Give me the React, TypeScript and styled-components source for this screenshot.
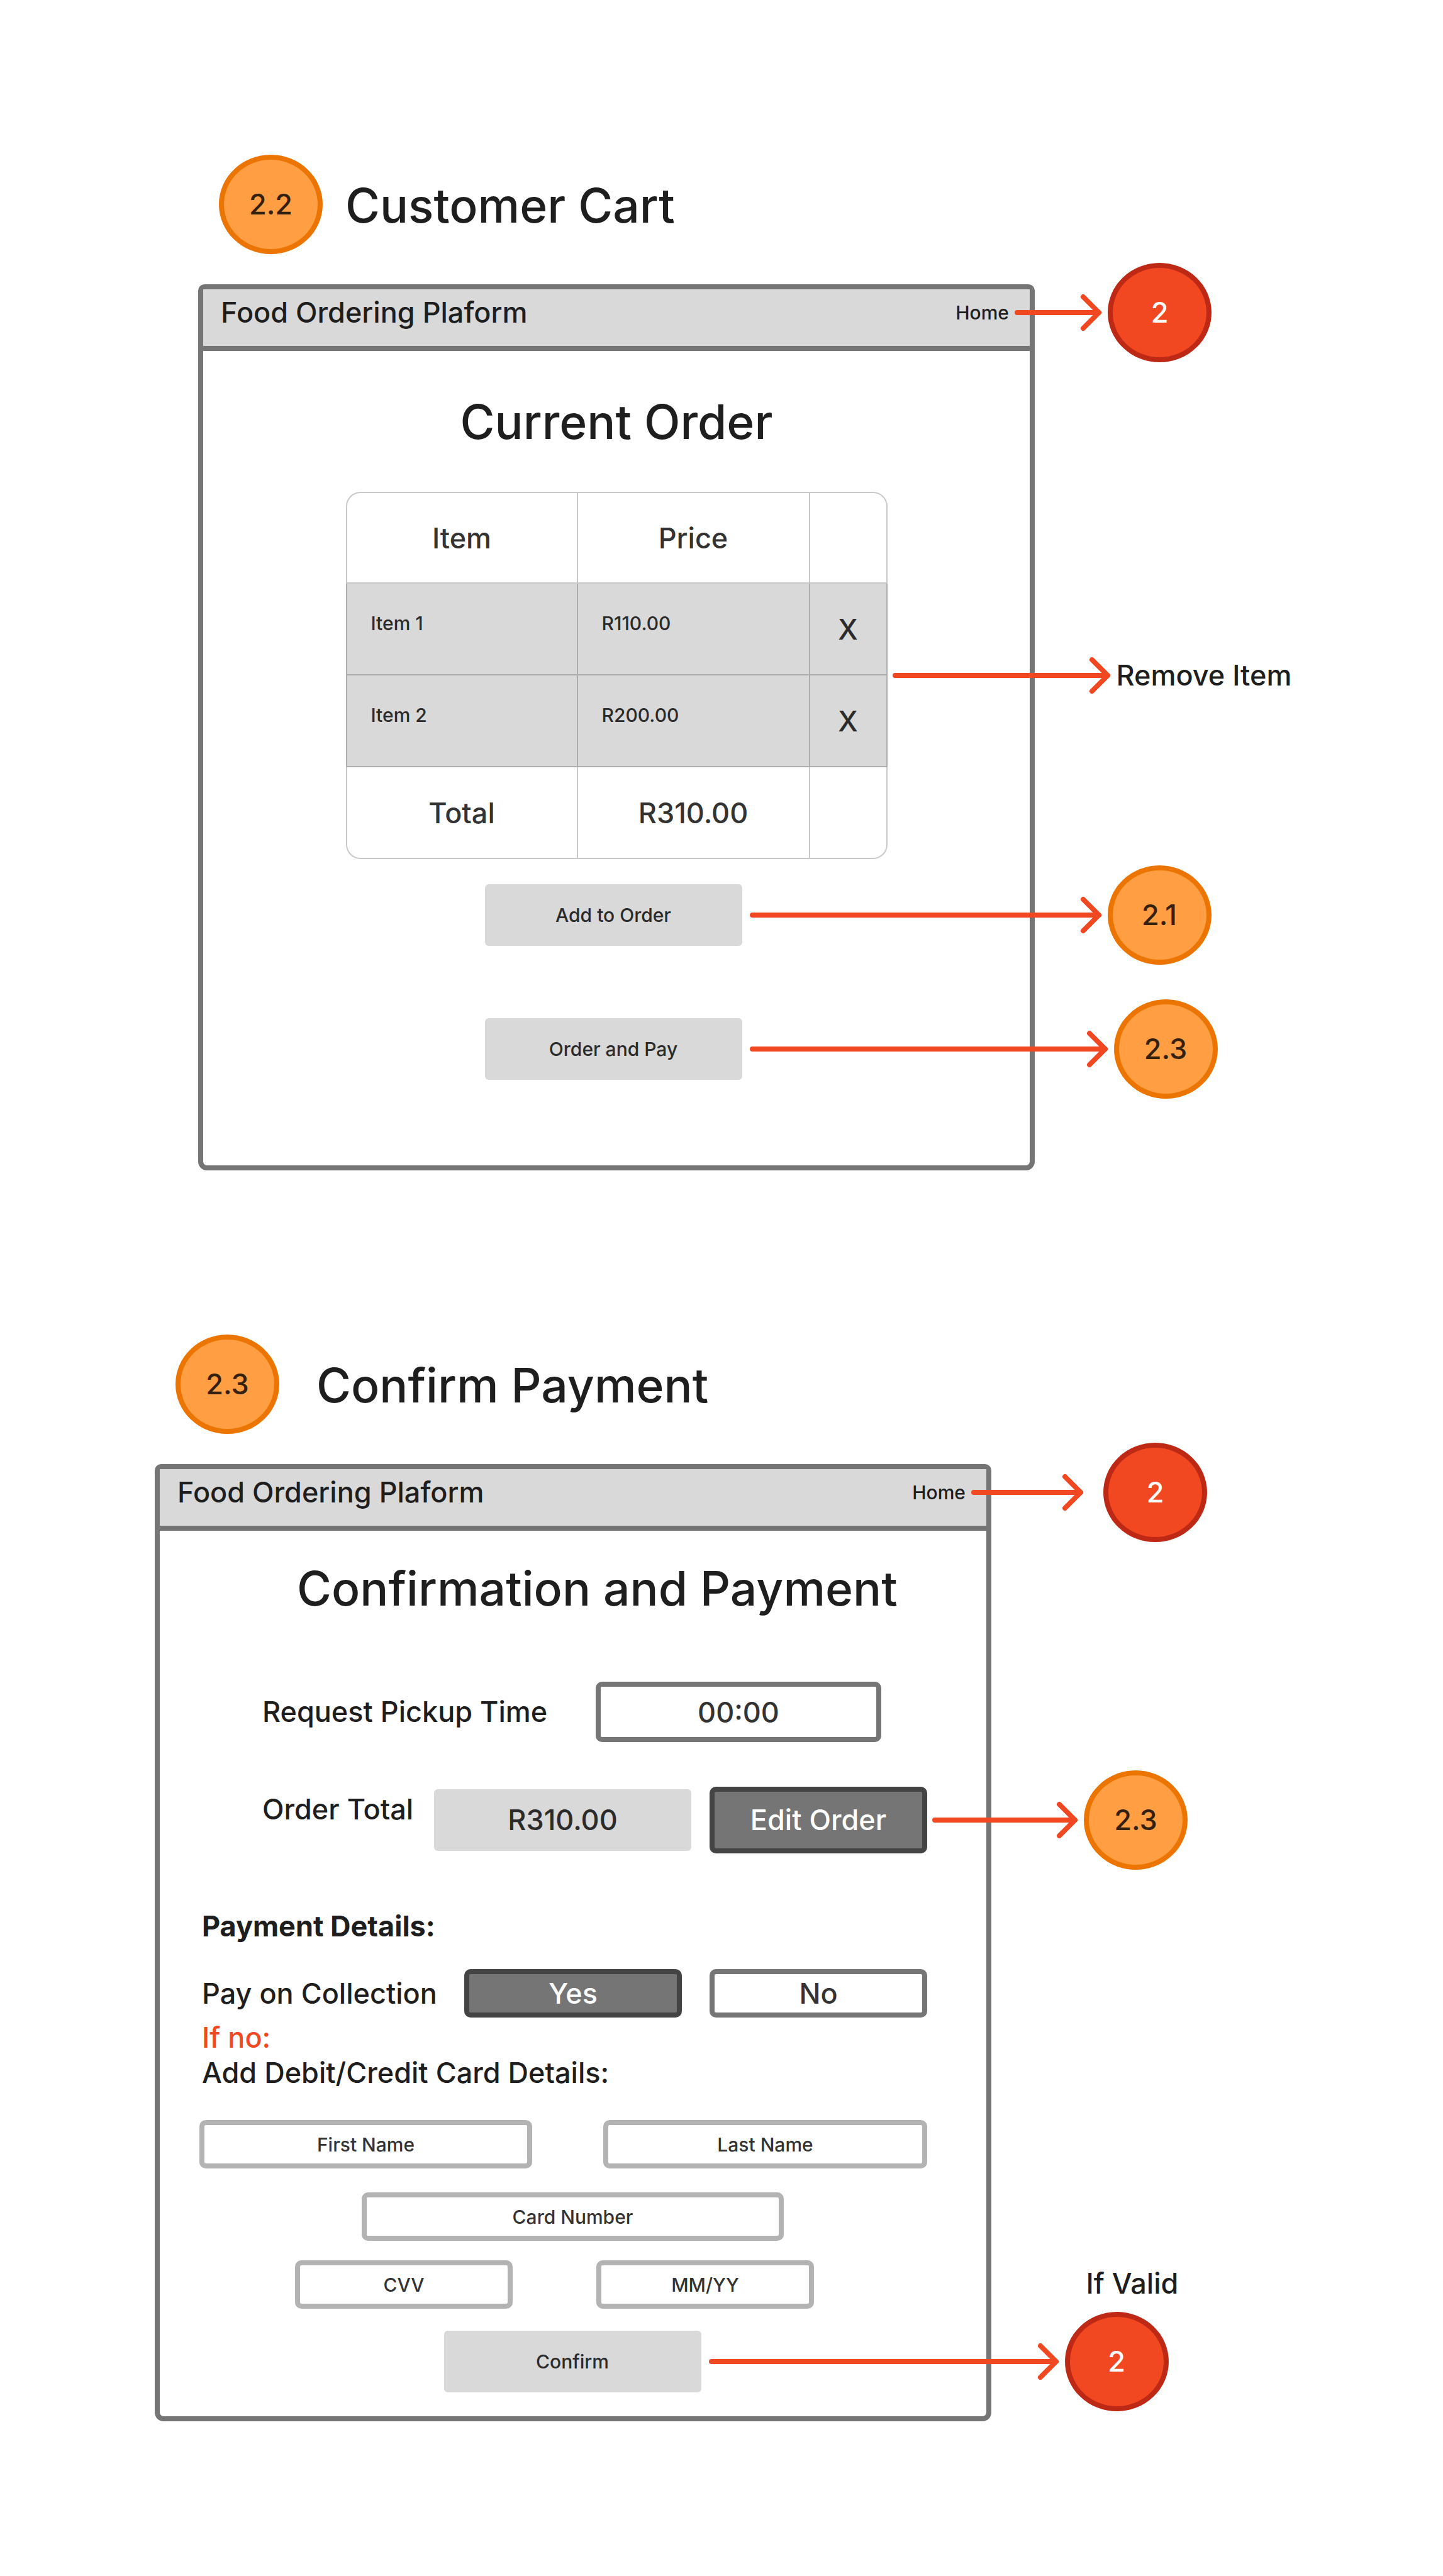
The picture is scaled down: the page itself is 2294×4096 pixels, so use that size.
import React from "react";
import styled, { createGlobalStyle } from "styled-components";

const color = {
  ink: "#1e1e1e",
  text: "#333333",
  textOnGray: "#2b2b2b",
  frame: "#757575",
  dark: "#444444",
  field: "#b3b3b3",
  fill: "#d9d9d9",
  line: "#c9c9c9",
  lineDark: "#adadad",
  flow: "#f24822",
};

const tones = {
  orange: { fill: "#ff9e42", edge: "#eb7500", text: "#33200d" },
  red: { fill: "#f24822", edge: "#bd2915", text: "#ffffff" },
};

type Tone = keyof typeof tones;

const GlobalStyle = createGlobalStyle`
  *, *::before, *::after { box-sizing: border-box; }
  body {
    margin: 0;
    background: #ffffff;
    color: ${color.ink};
    font-family: Inter, "Liberation Sans", sans-serif;
    font-size: 45px;
    font-weight: 500;
    line-height: 56px;
  }
  button, input { font: inherit; margin: 0; }
`;

const Page = styled.main`
  display: flex;
  flex-direction: column;
  gap: 261px;
  padding: 246px 0;
`;

const Section = styled.section<{ $indent: number }>`
  display: flex;
  flex-direction: column;
  gap: 48px;
  padding-left: ${(p) => p.$indent}px;
`;

const SectionHeading = styled.header<{ $gap: number }>`
  display: flex;
  align-items: center;
  gap: ${(p) => p.$gap}px;
  padding-left: 33px;
`;

const Title = styled.h1`
  margin: 0;
  padding-top: 2px;
  font-size: 75px;
  font-weight: 500;
  line-height: 93px;
`;

const Badge = styled.span<{ $tone: Tone }>`
  display: flex;
  flex: none;
  align-items: center;
  justify-content: center;
  width: 165px;
  height: 158px;
  border: 8px solid ${(p) => tones[p.$tone].edge};
  border-radius: 50%;
  background: ${(p) => tones[p.$tone].fill};
  color: ${(p) => tones[p.$tone].text};
`;

const Frame = styled.article`
  width: 100%;
  max-width: 1330px;
  border: 8px solid ${color.frame};
  border-radius: 10px 10px 14px 14px;
`;

const TopBar = styled.div`
  display: flex;
  align-items: flex-start;
  justify-content: space-between;
  height: 98px;
  padding: 9px 33px 0 28px;
  border-bottom: 8px solid ${color.frame};
  background: ${color.fill};
`;

const HomeLink = styled.a`
  display: block;
  color: inherit;
  font-size: 30px;
  text-decoration: none;
`;

const Anchor = styled.div`
  position: relative;
`;

/* Sits to the right of its anchor and runs out over the frame's edge. */
const CalloutBox = styled.div<{ $offset: number; $gap: number }>`
  position: absolute;
  top: 50%;
  left: 100%;
  z-index: 1;
  display: flex;
  align-items: center;
  gap: ${(p) => p.$gap}px;
  margin-left: ${(p) => p.$offset}px;
  transform: translateY(-50%);
  white-space: nowrap;
`;

const ArrowSvg = styled.svg`
  display: block;
  flex: none;
  fill: none;
  stroke: ${color.flow};
  stroke-width: 8px;
  stroke-linecap: round;
  stroke-linejoin: round;
`;

const BadgeSlot = styled.div`
  position: relative;
`;

const BadgeNote = styled.span`
  position: absolute;
  bottom: 100%;
  left: 34px;
  margin-bottom: 17px;
`;

const CartBody = styled.div`
  display: flex;
  flex-direction: column;
  align-items: center;
  padding: 66px 0 136px;
`;

const FrameTitle = styled.h2`
  margin: 0;
  font-size: 75px;
  font-weight: 500;
  line-height: 93px;
`;

const TableAnchor = styled(Anchor)`
  margin-top: 65px;
`;

const OrderTable = styled.table`
  width: 861px;
  table-layout: fixed;
  border-collapse: separate;
  border-spacing: 0;
  color: ${color.text};

  th, td {
    height: 146px;
    padding: 2px 0 0;
    border: 0 solid ${color.line};
    border-width: 0 2px 2px 0;
    font-weight: 500;
    text-align: center;
    vertical-align: middle;
  }
  th:first-child, td:first-child { border-left-width: 2px; }
  thead th, thead td { border-top-width: 2px; }
  thead tr > :first-child { border-top-left-radius: 23px; }
  thead tr > :last-child { border-top-right-radius: 23px; }
  tfoot tr > :first-child { border-bottom-left-radius: 23px; }
  tfoot tr > :last-child { border-bottom-right-radius: 23px; }
`;

const ItemRow = styled.tr`
  background: ${color.fill};
  color: ${color.textOnGray};

  && td { border-color: ${color.lineDark}; }
`;

const ItemCell = styled.td`
  &&& {
    padding: 44px 38px 0 38px;
    font-size: 30px;
    line-height: 38px;
    text-align: left;
    vertical-align: top;
  }
`;

const NarrowCol = styled.col`
  width: 123px;
`;

const RemoveButton = styled.button`
  width: 100%;
  padding: 0;
  border: 0;
  background: none;
  color: inherit;
`;

const Actions = styled.div`
  display: flex;
  flex-direction: column;
  gap: 115px;
  padding: 40px 10px 0 0;
`;

const PlainButton = styled.button`
  display: block;
  width: 409px;
  height: 98px;
  padding: 0;
  border: 0;
  border-radius: 6px;
  background: ${color.fill};
  color: ${color.textOnGray};
  font-size: 30px;
`;

const Choice = styled.button<{ $filled?: boolean; $tall?: boolean }>`
  display: block;
  width: 346px;
  height: ${(p) => (p.$tall ? 106 : 77)}px;
  padding: 0;
  border: 8px solid ${(p) => (p.$filled ? color.dark : color.frame)};
  border-radius: 10px;
  background: ${(p) => (p.$filled ? color.frame : "#ffffff")};
  color: ${(p) => (p.$filled ? "#ffffff" : color.text)};
`;

const PaymentBody = styled.form`
  padding: 45px 0 38px;
`;

const PaymentTitle = styled(FrameTitle)`
  padding-left: 218px;
`;

const PickupRow = styled.div`
  display: flex;
  align-items: center;
  padding: 102px 0 0 163px;
`;

const PickupLabel = styled.label`
  width: 530px;
`;

const TimeInput = styled.input`
  width: 454px;
  height: 96px;
  padding: 0;
  border: 8px solid ${color.frame};
  border-radius: 10px;
  background: #ffffff;
  color: ${color.text};
  text-align: center;
`;

const TotalRow = styled.div`
  display: flex;
  align-items: center;
  padding: 71px 0 0 163px;
`;

const TotalLabel = styled.label`
  align-self: flex-start;
  width: 273px;
  padding-top: 8px;
`;

const TotalValue = styled.output`
  display: flex;
  align-items: center;
  justify-content: center;
  width: 409px;
  height: 98px;
  margin-right: 29px;
  border-radius: 6px;
  background: ${color.fill};
  color: ${color.textOnGray};
`;

const Details = styled.div`
  padding: 88px 0 0 67px;
`;

const DetailsTitle = styled.h3`
  margin: 0;
  font-size: 45px;
  font-weight: 700;
  line-height: 56px;
`;

const CollectionRow = styled.div`
  display: flex;
  align-items: center;
  gap: 44px;
  padding: 40px 0 4px;
  white-space: nowrap;
`;

const CollectionLabel = styled.span`
  width: 373px;
`;

const Note = styled.p<{ $accent?: boolean }>`
  margin: 0;
  color: ${(p) => (p.$accent ? color.flow : "inherit")};
`;

const FieldRow = styled.div<{ $gap?: number; $indent: number; $top: number }>`
  display: flex;
  gap: ${(p) => p.$gap ?? 0}px;
  padding: ${(p) => p.$top}px 0 0 ${(p) => p.$indent}px;
`;

const Field = styled.input<{ $width: number }>`
  width: ${(p) => p.$width}px;
  height: 77px;
  padding: 0;
  border: 8px solid ${color.field};
  border-radius: 10px;
  background: #ffffff;
  color: ${color.text};
  font-size: 30px;
  text-align: center;

  &::placeholder {
    color: ${color.text};
    opacity: 1;
  }
`;

const ConfirmRow = styled.div`
  display: flex;
  justify-content: center;
  padding: 35px 2px 0 0;
`;

function Arrow({ length }: { length: number }) {
  const tip = length - 5;
  return (
    <ArrowSvg width={length} height={58} viewBox={`0 0 ${length} 58`} aria-hidden="true">
      <path d={`M4 29H${tip}M${tip - 25} 4L${tip} 29L${tip - 25} 54`} />
    </ArrowSvg>
  );
}

interface CalloutProps {
  length: number;
  offset: number;
  gap?: number;
  children: React.ReactNode;
}

function Callout({ length, offset, gap = 9, children }: CalloutProps) {
  return (
    <CalloutBox $offset={offset} $gap={gap}>
      <Arrow length={length} />
      {children}
    </CalloutBox>
  );
}

function FrameBar({ length, gap }: { length: number; gap?: number }) {
  return (
    <TopBar>
      <span>Food Ordering Plaform</span>
      <Anchor>
        <HomeLink href="#home">Home</HomeLink>
        <Callout length={length} offset={9} gap={gap}>
          <Badge $tone="red">2</Badge>
        </Callout>
      </Anchor>
    </TopBar>
  );
}

const items = [
  { name: "Item 1", price: "R110.00" },
  { name: "Item 2", price: "R200.00" },
];

function CustomerCart() {
  return (
    <Section $indent={315}>
      <SectionHeading $gap={36}>
        <Badge $tone="orange">2.2</Badge>
        <Title>Customer Cart</Title>
      </SectionHeading>
      <Frame>
        <FrameBar length={139} />
        <CartBody>
          <FrameTitle>Current Order</FrameTitle>
          <TableAnchor>
            <OrderTable>
              <colgroup>
                <col />
                <col />
                <NarrowCol />
              </colgroup>
              <thead>
                <tr>
                  <th scope="col">Item</th>
                  <th scope="col">Price</th>
                  <td />
                </tr>
              </thead>
              <tbody>
                {items.map((item) => (
                  <ItemRow key={item.name}>
                    <ItemCell>{item.name}</ItemCell>
                    <ItemCell>{item.price}</ItemCell>
                    <td>
                      <RemoveButton type="button">X</RemoveButton>
                    </td>
                  </ItemRow>
                ))}
              </tbody>
              <tfoot>
                <tr>
                  <th scope="row">Total</th>
                  <td>R310.00</td>
                  <td />
                </tr>
              </tfoot>
            </OrderTable>
            <Callout length={347} offset={8}>
              <span>Remove Item</span>
            </Callout>
          </TableAnchor>
          <Actions>
            <Anchor>
              <PlainButton type="button">Add to Order</PlainButton>
              <Callout length={560} offset={12}>
                <Badge $tone="orange">2.1</Badge>
              </Callout>
            </Anchor>
            <Anchor>
              <PlainButton type="button">Order and Pay</PlainButton>
              <Callout length={570} offset={12}>
                <Badge $tone="orange">2.3</Badge>
              </Callout>
            </Anchor>
          </Actions>
        </CartBody>
      </Frame>
    </Section>
  );
}

function ConfirmPayment() {
  return (
    <Section $indent={246}>
      <SectionHeading $gap={59}>
        <Badge $tone="orange">2.3</Badge>
        <Title>Confirm Payment</Title>
      </SectionHeading>
      <Frame>
        <FrameBar length={179} gap={31} />
        <PaymentBody>
          <PaymentTitle>Confirmation and Payment</PaymentTitle>
          <PickupRow>
            <PickupLabel htmlFor="pickup">Request Pickup Time</PickupLabel>
            <TimeInput id="pickup" type="text" defaultValue="00:00" />
          </PickupRow>
          <TotalRow>
            <TotalLabel htmlFor="total">Order Total</TotalLabel>
            <TotalValue id="total">R310.00</TotalValue>
            <Anchor>
              <Choice type="button" $filled $tall>
                Edit Order
              </Choice>
              <Callout length={232} offset={8}>
                <Badge $tone="orange">2.3</Badge>
              </Callout>
            </Anchor>
          </TotalRow>
          <Details>
            <DetailsTitle>Payment Details:</DetailsTitle>
            <CollectionRow role="group" aria-labelledby="collection">
              <CollectionLabel id="collection">Pay on Collection</CollectionLabel>
              <Choice type="button" $filled aria-pressed="true">
                Yes
              </Choice>
              <Choice type="button" aria-pressed="false">
                No
              </Choice>
            </CollectionRow>
            <Note $accent>If no:</Note>
            <Note>Add Debit/Credit Card Details:</Note>
          </Details>
          <FieldRow $top={47} $indent={63} $gap={113}>
            <Field $width={529} placeholder="First Name" aria-label="First Name" />
            <Field $width={515} placeholder="Last Name" aria-label="Last Name" />
          </FieldRow>
          <FieldRow $top={38} $indent={321}>
            <Field $width={671} placeholder="Card Number" aria-label="Card Number" />
          </FieldRow>
          <FieldRow $top={31} $indent={215} $gap={133}>
            <Field $width={346} placeholder="CVV" aria-label="CVV" />
            <Field $width={346} placeholder="MM/YY" aria-label="MM/YY" />
          </FieldRow>
          <ConfirmRow>
            <Anchor>
              <PlainButton type="submit">Confirm</PlainButton>
              <Callout length={557} offset={12}>
                <BadgeSlot>
                  <BadgeNote>If Valid</BadgeNote>
                  <Badge $tone="red">2</Badge>
                </BadgeSlot>
              </Callout>
            </Anchor>
          </ConfirmRow>
        </PaymentBody>
      </Frame>
    </Section>
  );
}

export default function App() {
  return (
    <>
      <GlobalStyle />
      <Page>
        <CustomerCart />
        <ConfirmPayment />
      </Page>
    </>
  );
}
